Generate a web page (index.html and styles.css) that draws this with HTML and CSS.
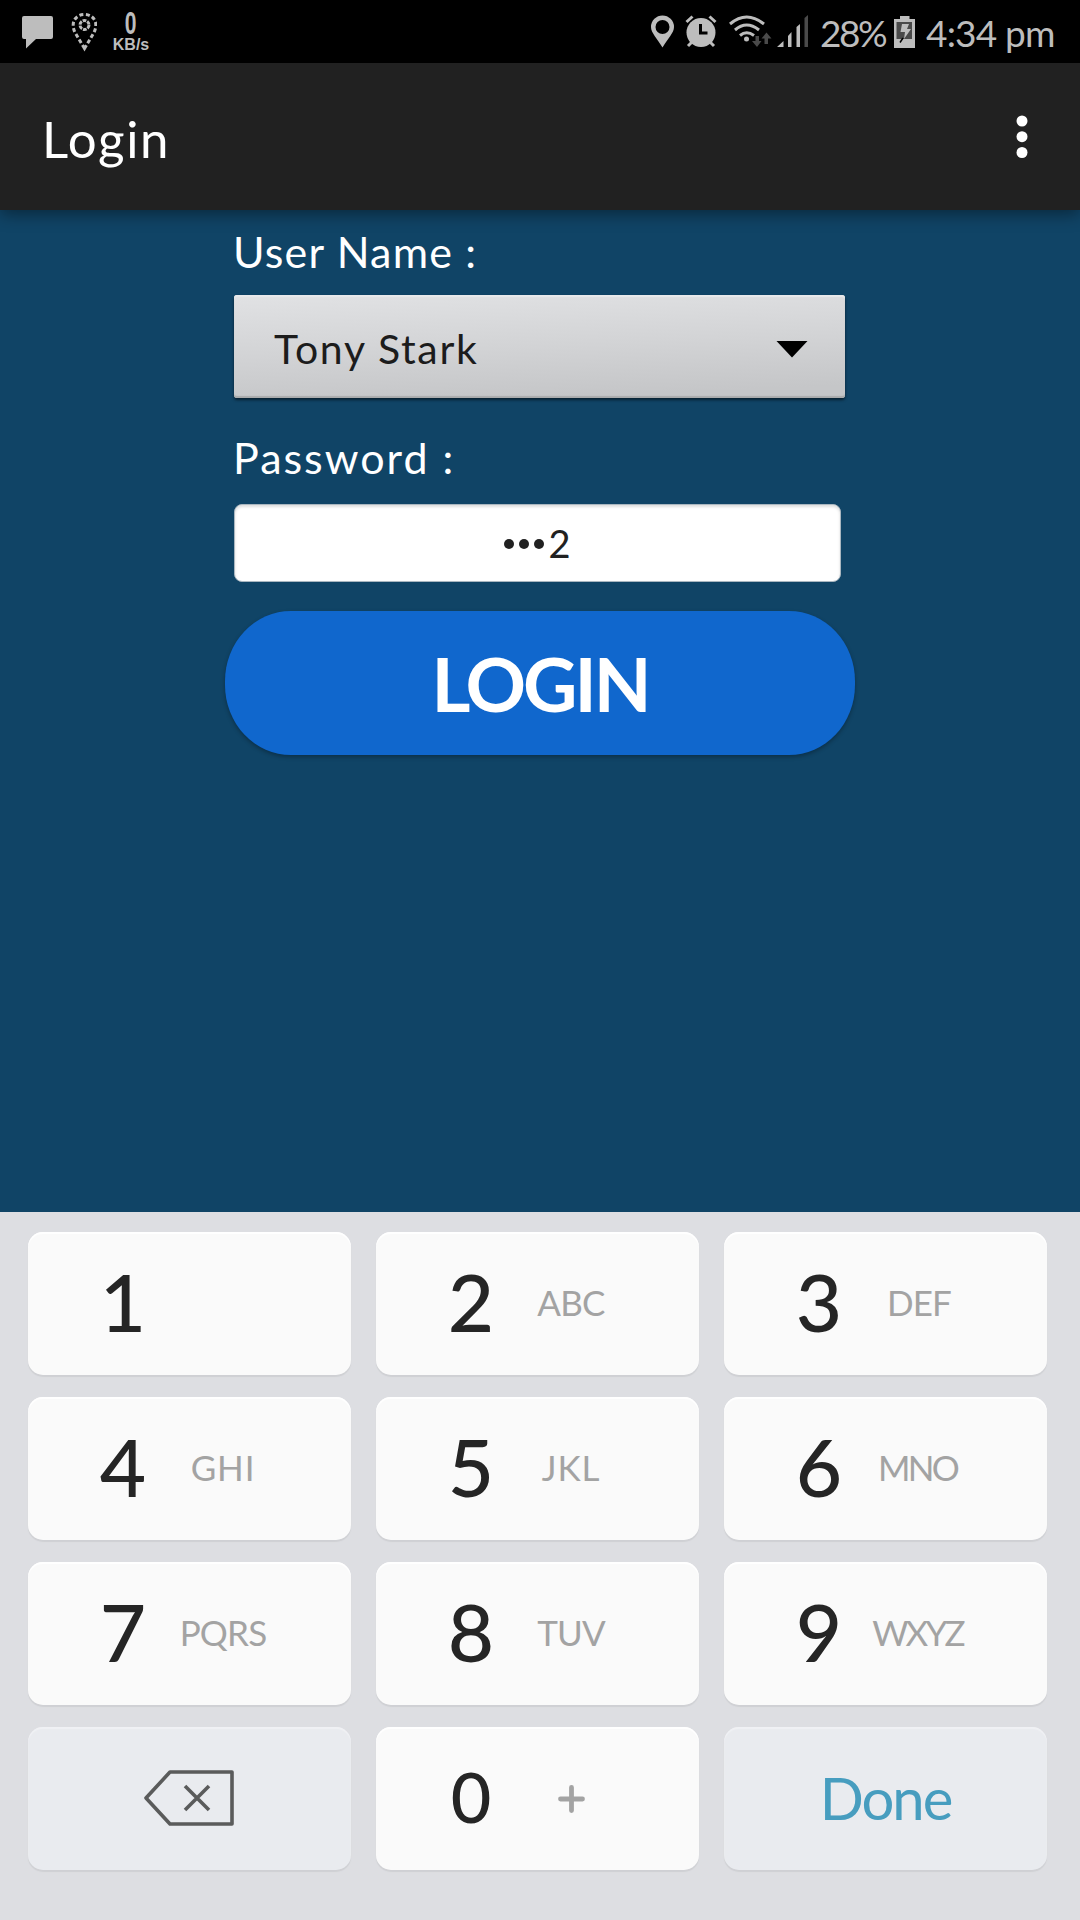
FILE: index.html
```html
<!DOCTYPE html>
<html lang="en">
<head>
<meta charset="utf-8">
<title>Login</title>
<link rel="stylesheet" href="styles.css">
</head>
<body>
<header class="status">
  <svg class="status-left" width="75" height="63" viewBox="22 0 75 63">
    <path fill="#bdbdbd" d="M24 16h27a2 2 0 0 1 2 2v19a2 2 0 0 1-2 2H36l-10 9.500V39h-2a2 2 0 0 1-2-2V18a2 2 0 0 1 2-2z"/>
    <path fill="none" stroke="#bdbdbd" stroke-width="3" stroke-dasharray="4 2.400" d="M84.500 48.500 L75 32.500 C70 22 76 14.500 84.500 14.500 C93 14.500 99 22 94 32.500 Z"/>
    <circle cx="84.500" cy="25" r="4.500" fill="none" stroke="#bdbdbd" stroke-width="3" stroke-dasharray="3.700 1"/>
  </svg>
  <div class="speed"><span class="speed-value">0</span><span class="speed-unit">KB/s</span></div>
  <svg class="status-icons" width="164" height="63" viewBox="648 0 164 63">
    <path fill="#bdbdbd" fill-rule="evenodd" d="M662.500 47.500C657 38 651 33 651 27a11.500 11.500 0 0 1 23 0C674 33 668 38 662.500 47.500zM662.500 20a7 7 0 1 0 0 14a7 7 0 0 0 0-14z"/>
    <g stroke="#bdbdbd" stroke-width="3" fill="none">
      <path d="M686.500 22l6-5.500M715.500 22l-6-5.500M692 42l-4 4M710 42l4 4"/>
    </g>
    <circle cx="701" cy="32.500" r="14.500" fill="#bdbdbd"/>
    <path d="M700.500 24v9h7" fill="none" stroke="#000" stroke-width="3"/>
    <g fill="none" stroke="#bdbdbd" stroke-width="3">
      <path d="M730 24Q746.500 10 764 24M735 30Q746.500 20 759 30M740 35.500Q746.500 30 754 35.500"/>
    </g>
    <circle cx="746.500" cy="39" r="2.500" fill="#bdbdbd"/>
    <path fill="#4a4a4a" d="M755.500 36h3.500v5h2.500l-4.500 6-5-6h3.500zM764.500 44h3.500v-5.500h3.500l-5-6-5 6h3z"/>
    <path fill="#bdbdbd" d="M777 47l6.500-6v6zM788 36l3.500-4v15H788zM796.500 27l3.500-3v23h-3.500z"/>
    <path fill="#4a4a4a" d="M804.500 18l3.500-3v32h-3.500z"/>
  </svg>
  <span class="percent">28%</span>
  <svg class="battery" width="21" height="63" viewBox="894 0 21 63">
    <path fill="#bdbdbd" d="M900 16h9.500v3h5.500v29h-21V19h6z"/>
    <path fill="#4a4a4a" d="M896.500 22h15.500v17h-15.500z"/>
    <path fill="#bdbdbd" d="M902 24h7l-2 5h4l-7 10 1-7h-4.500z"/>
    <path d="M903 38l-3 4.500" stroke="#000" stroke-width="1.500"/>
  </svg>
  <span class="clock">4:34 pm</span>
</header>
<div class="appbar">
  <h1 class="title">Login</h1>
  <svg class="menu" width="12" height="44" viewBox="0 0 12 44"><g fill="#fff"><circle cx="6" cy="6" r="5.500"/><circle cx="6" cy="21.700" r="5.500"/><circle cx="6" cy="37.500" r="5.500"/></g></svg>
</div>
<main class="form">
  <label class="label label-user">User Name :</label>
  <div class="select"><span class="select-text">Tony Stark</span>
    <svg width="32" height="17" viewBox="0 0 32 17"><path d="M0.500 0h31L16 16.500z"/></svg></div>
  <label class="label label-pass">Password :</label>
  <div class="input"><i class="dot"></i><i class="dot"></i><i class="dot"></i><span class="last">2</span></div>
  <button class="login"><span class="login-text">LOGIN</span></button>
</main>
<section class="keypad">
  <div class="key"><span class="digit">1</span></div>
  <div class="key"><span class="digit">2</span><span class="letters">ABC</span></div>
  <div class="key"><span class="digit">3</span><span class="letters">DEF</span></div>
  <div class="key"><span class="digit">4</span><span class="letters loose">GHI</span></div>
  <div class="key"><span class="digit">5</span><span class="letters loose">JKL</span></div>
  <div class="key"><span class="digit">6</span><span class="letters tight">MNO</span></div>
  <div class="key"><span class="digit">7</span><span class="letters">PQRS</span></div>
  <div class="key"><span class="digit">8</span><span class="letters">TUV</span></div>
  <div class="key"><span class="digit">9</span><span class="letters tight">WXYZ</span></div>
  <div class="key key-action"><svg class="backspace" width="90" height="56" viewBox="0 0 90 56"><path d="M26 2h62v52H26L2 28zM41 16l24 24M65 16L41 40" fill="none" stroke="#5a5b5b" stroke-width="3.600" stroke-linejoin="round"/></svg></div>
  <div class="key"><span class="digit zero">0</span><svg class="plus" width="27" height="28" viewBox="0 0 27 28"><path d="M2.500 14h22M13.500 2.500v23" stroke="#a3a3a3" stroke-width="4.800" stroke-linecap="round"/></svg></div>
  <div class="key key-action"><span class="done">Done</span></div>
</section>
</body>
</html>
```
FILE: styles.css
```css
* { box-sizing: border-box; }
body {
  margin: 0;
  width: 1080px;
  height: 1920px;
  overflow: hidden;
  display: flex;
  flex-direction: column;
  font-family: Lato, "Open Sans", sans-serif;
  background: #104466;
}
svg { display: block; flex: none; }
span { white-space: nowrap; }
.status {
  height: 63px;
  flex: none;
  background: #000;
  color: #bdbdbd;
  display: flex;
  padding-left: 22px;
}
.speed {
  width: 40px;
  margin-left: 14px;
  padding-top: 11px;
  display: flex;
  flex-direction: column;
  align-items: center;
  font-family: "Liberation Sans", sans-serif;
  font-weight: bold;
}
.speed-value { font-size: 31px; line-height: 26px; transform: scaleX(.68); }
.speed-unit { font-size: 16px; line-height: 16px; }
.status-icons { margin-left: 497px; }
.percent { width: 70px; margin-left: 8px; font-size: 37px; line-height: 65px; letter-spacing: -2.500px; }
.battery { margin-left: 4px; }
.clock { margin-left: 11px; font-size: 37px; line-height: 66px; letter-spacing: -.8px; }
.appbar {
  height: 147px;
  flex: none;
  background: #212121;
  box-shadow: 0 4px 16px rgba(0, 0, 0, .42);
  display: flex;
  justify-content: space-between;
  align-items: center;
  padding: 0 52px 0 42px;
}
.title { margin: 4px 0 0; color: #fff; font-size: 51px; line-height: 60px; font-weight: 400; letter-spacing: 1.500px; }
.form {
  height: 1002px;
  flex: none;
  padding: 18px 0 0 234px;
  display: flex;
  flex-direction: column;
  align-items: flex-start;
}
.label { color: #fff; font-size: 43px; line-height: 48px; margin-left: -1px; }
.label-user { letter-spacing: 1.200px; }
.select {
  width: 611px;
  height: 103px;
  margin-top: 19px;
  padding: 5px 37px 0 40px;
  border-radius: 3px;
  background: linear-gradient(178deg, #e1e2e4, #d2d3d5 50%, #c5c6c8 90%);
  box-shadow: 0 2px 3px rgba(0, 0, 0, .55), inset 0 2px 1px #e8e9eb, inset 0 -2px 1px #aaabac;
  display: flex;
  justify-content: space-between;
  align-items: center;
  color: #1c1c1c;
}
.select-text { font-size: 41px; line-height: 50px; letter-spacing: 1.700px; }
.label-pass { margin-top: 36px; letter-spacing: 2px; }
.input {
  width: 607px;
  height: 78px;
  margin-top: 22px;
  border: 1px solid #aab7c0;
  border-radius: 8px;
  background: #fff;
  box-shadow: inset 0 2px 3px #dedede;
  display: flex;
  justify-content: center;
  align-items: center;
  gap: 5px;
  color: #212121;
}
.dot { width: 10px; height: 10px; margin-top: 2px; border-radius: 50%; background: #212121; }
.last { font-size: 38px; line-height: 40px; margin-left: -1px; }
.login {
  width: 630px;
  height: 144px;
  margin: 29px 0 0 -9px;
  padding: 0;
  border: 0;
  border-radius: 66px / 70px;
  background: #1067cd;
  box-shadow: 0 2px 4px rgba(0, 0, 0, .3);
  color: #fff;
  font-family: inherit;
  font-size: 75px;
  font-weight: 700;
  letter-spacing: -3px;
}
.keypad {
  height: 708px;
  flex: none;
  background: #dddee2;
  padding: 20px 33px 50px 28px;
  display: grid;
  grid-template-columns: repeat(3, 323px);
  grid-auto-rows: 143px;
  gap: 22px 25px;
}
.key {
  border-radius: 15px;
  background: #fafafa;
  box-shadow: inset 0 2px 1px #fff, 0 2px 1px #cfd0d4;
  display: grid;
  grid-template-columns: 100px 100px;
  padding-left: 45px;
  align-items: center;
  justify-items: center;
}
.digit { font-size: 80px; line-height: 90px; font-weight: 500; color: #252525; margin-top: -6px; }
.zero { font-size: 70px; margin-top: -5px; }
.letters { font-size: 35px; font-weight: 400; color: #a3a3a3; letter-spacing: -.8px; margin-top: -4px; }
.loose { letter-spacing: .8px; }
.tight { letter-spacing: -2.800px; margin-left: -3px; }
.key-action {
  display: flex;
  justify-content: center;
  padding: 0;
  background: #e9ebef;
  box-shadow: inset 0 2px 1px #f0f1f4, 0 2px 1px #cfd0d4;
}
.backspace { margin: -2px 1px 0 0; }
.done { font-size: 58px; color: #479dbf; letter-spacing: -2px; margin-top: -2px; }
```
